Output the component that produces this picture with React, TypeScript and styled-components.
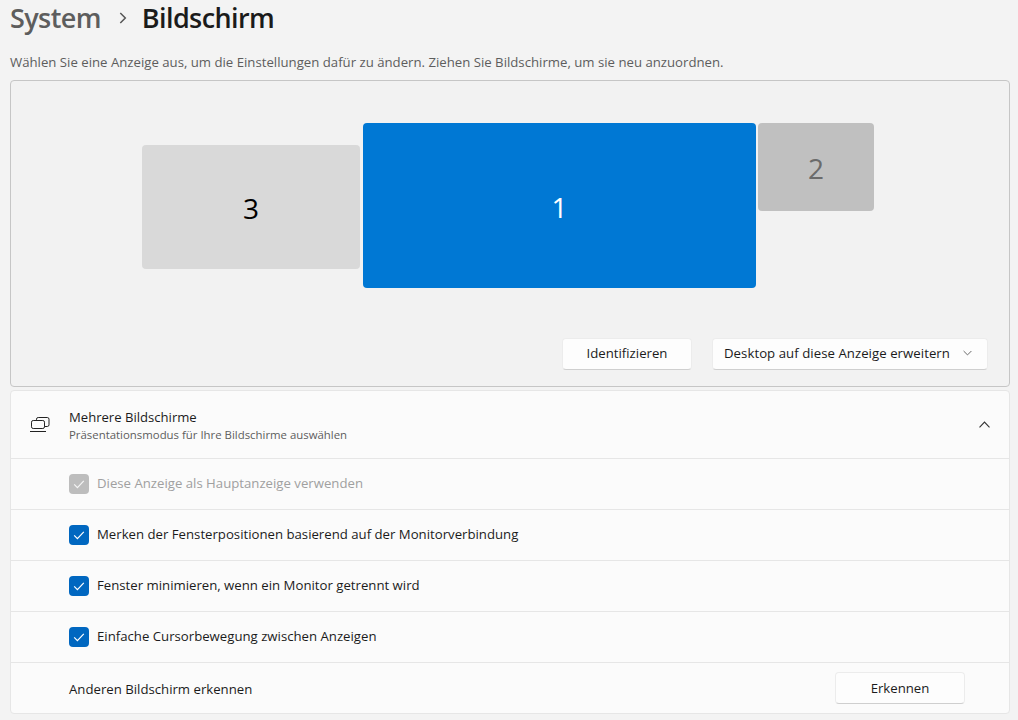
import React from "react";
import styled, { createGlobalStyle } from "styled-components";

const FONT = `"Open Sans", "Noto Sans", "Liberation Sans", sans-serif`;

const GlobalStyle = createGlobalStyle`
  html, body {
    margin: 0;
    height: 100%;
    background: #f3f3f3;
    overflow: hidden;
  }
  * {
    box-sizing: border-box;
  }
`;

const CheckIcon = () => (
  <svg width="12" height="12" viewBox="0 0 12 12" fill="none">
    <path d="M1.2 6.4 4.4 9.6 10.8 2.8" stroke="currentColor" strokeWidth="1.2" />
  </svg>
);

const ChevronDown = () => (
  <svg width="9" height="6" viewBox="0 0 9 6" fill="none">
    <path d="M.6 1 4.5 4.9 8.4 1" stroke="#6a6a6a" strokeWidth="1" />
  </svg>
);

const ChevronUp = () => (
  <svg width="11" height="7" viewBox="0 0 11 7" fill="none">
    <path d="M.5 6.3 5.5 1l5 5.3" stroke="#333" strokeWidth="1.1" />
  </svg>
);

const ChevronRight = () => (
  <svg width="8" height="12" viewBox="0 0 8 12" fill="none">
    <path d="M1.3 1 6.3 6l-5 5" stroke="#555" strokeWidth="1.5" />
  </svg>
);

const DisplaysIcon = () => (
  <svg width="20" height="16" viewBox="0 0 20 16" fill="none" stroke="#222" strokeWidth="1">
    <path d="M6.5 3.5V2.2A1.7 1.7 0 0 1 8.2.5h9.1A1.7 1.7 0 0 1 19 2.2v5.6a1.7 1.7 0 0 1-1.7 1.7h-2.8" />
    <rect x="1.5" y="3.5" width="13" height="8" rx="1.7" />
    <path d="M0 14.5h16" />
  </svg>
);

const options = [
  { label: "Diese Anzeige als Hauptanzeige verwenden", disabled: true },
  { label: "Merken der Fensterpositionen basierend auf der Monitorverbindung", disabled: false },
  { label: "Fenster minimieren, wenn ein Monitor getrennt wird", disabled: false },
  { label: "Einfache Cursorbewegung zwischen Anzeigen", disabled: false },
];

const App = () => {
  return (
    <Page>
      <GlobalStyle />
      <Breadcrumb>
        <ParentCrumb>System</ParentCrumb>
        <CrumbSeparator>
          <ChevronRight />
        </CrumbSeparator>
        <CurrentCrumb>Bildschirm</CurrentCrumb>
      </Breadcrumb>
      <Hint>
        Wählen Sie eine Anzeige aus, um die Einstellungen dafür zu ändern. Ziehen Sie Bildschirme, um sie neu anzuordnen.
      </Hint>
      <Arrangement>
        <Monitor $variant="light" $left={131} $top={64} $width={218} $height={124}>3</Monitor>
        <Monitor $variant="active" $left={352} $top={42} $width={393} $height={165}>1</Monitor>
        <Monitor $variant="dark" $left={747} $top={42} $width={116} $height={88}>2</Monitor>
        <ArrangementActions>
          <Button $width={130}>Identifizieren</Button>
          <SelectButton>
            Desktop auf diese Anzeige erweitern
            <ChevronDown />
          </SelectButton>
        </ArrangementActions>
      </Arrangement>
      <Card>
        <CardHeader>
          <HeaderIcon>
            <DisplaysIcon />
          </HeaderIcon>
          <HeaderText>
            <HeaderTitle>Mehrere Bildschirme</HeaderTitle>
            <HeaderSubtitle>Präsentationsmodus für Ihre Bildschirme auswählen</HeaderSubtitle>
          </HeaderText>
          <ChevronUp />
        </CardHeader>
        {options.map((option) => (
          <Row key={option.label}>
            <Checkbox $disabled={option.disabled}>
              <CheckIcon />
            </Checkbox>
            <RowLabel $disabled={option.disabled}>{option.label}</RowLabel>
          </Row>
        ))}
        <DetectRow>
          <RowLabel>Anderen Bildschirm erkennen</RowLabel>
          <Button $width={130}>Erkennen</Button>
        </DetectRow>
      </Card>
    </Page>
  );
};

const Page = styled.div`
  width: 1018px;
  height: 720px;
  padding: 0 8px 0 10px;
  font-family: ${FONT};
  color: #1b1b1b;
  background: #f3f3f3;
  overflow: hidden;
`;

const Breadcrumb = styled.div`
  display: flex;
  align-items: center;
  height: 35px;
`;

const ParentCrumb = styled.span`
  font-size: 27px;
  font-weight: 600;
  letter-spacing: -0.6px;
  color: #5d5d5d;
`;

const CrumbSeparator = styled.span`
  display: flex;
  margin: 0 15px 0 18px;
`;

const CurrentCrumb = styled.span`
  font-size: 27px;
  font-weight: 600;
  letter-spacing: -0.6px;
  color: #1b1b1b;
`;

const Hint = styled.div`
  margin-top: 17px;
  height: 28px;
  font-size: 13.2px;
  line-height: 20px;
  color: #5d5d5d;
  white-space: nowrap;
`;

const Arrangement = styled.div`
  position: relative;
  display: flex;
  flex-direction: column;
  justify-content: flex-end;
  height: 307px;
  padding: 0 21px 16px 0;
  background: #f2f2f2;
  border: 1px solid #c6c6c6;
  border-radius: 4px;
`;

const monitorColors = {
  light: { bg: "#d9d9d9", fg: "#000000" },
  active: { bg: "#0078d4", fg: "#ffffff" },
  dark: { bg: "#c0c0c0", fg: "#6b6b6b" },
};

const Monitor = styled.div<{
  $variant: keyof typeof monitorColors;
  $left: number;
  $top: number;
  $width: number;
  $height: number;
}>`
  position: absolute;
  left: ${({ $left }) => $left}px;
  top: ${({ $top }) => $top}px;
  width: ${({ $width }) => $width}px;
  height: ${({ $height }) => $height}px;
  display: flex;
  align-items: center;
  justify-content: center;
  padding-top: 2px;
  border-radius: 4px;
  font-size: 28px;
  background: ${({ $variant }) => monitorColors[$variant].bg};
  color: ${({ $variant }) => monitorColors[$variant].fg};
`;

const ArrangementActions = styled.div`
  display: flex;
  justify-content: flex-end;
  gap: 20px;
  > div {
    padding-bottom: 2px;
  }
`;

const Button = styled.div<{ $width: number }>`
  display: flex;
  align-items: center;
  justify-content: center;
  width: ${({ $width }) => $width}px;
  height: 32px;
  font-size: 13.2px;
  color: #1b1b1b;
  background: #fdfdfd;
  border: 1px solid #ececec;
  border-bottom-color: #cfcfcf;
  border-radius: 4px;
`;

const SelectButton = styled.div`
  display: flex;
  align-items: center;
  justify-content: space-between;
  width: 276px;
  height: 32px;
  padding: 0 15px 0 11px;
  font-size: 13.2px;
  letter-spacing: 0.05px;
  color: #1b1b1b;
  background: #fdfdfd;
  border: 1px solid #ececec;
  border-bottom-color: #cfcfcf;
  border-radius: 4px;
  white-space: nowrap;
`;

const Card = styled.div`
  margin-top: 3px;
  width: 1000px;
  background: #fbfbfb;
  border: 1px solid #e6e6e6;
  border-radius: 4px;
`;

const CardHeader = styled.div`
  display: flex;
  align-items: center;
  height: 67px;
  padding: 0 19px 0 19px;
`;

const HeaderIcon = styled.div`
  display: flex;
  width: 39px;
  margin-top: 1px;
`;

const HeaderText = styled.div`
  display: flex;
  flex: 1;
  flex-direction: column;
  gap: 1px;
`;

const HeaderTitle = styled.div`
  font-size: 13.1px;
  line-height: 18px;
`;

const HeaderSubtitle = styled.div`
  font-size: 11.4px;
  line-height: 15px;
  color: #5d5d5d;
`;

const Row = styled.div`
  display: flex;
  align-items: center;
  gap: 8px;
  height: 51px;
  padding-left: 58px;
  border-top: 1px solid #e6e6e6;
`;

const DetectRow = styled(Row)`
  justify-content: space-between;
  padding-right: 44px;
  > div:first-child {
    margin-top: 1px;
  }
`;

const Checkbox = styled.div<{ $disabled: boolean }>`
  display: flex;
  align-items: center;
  justify-content: center;
  width: 20px;
  height: 20px;
  border-radius: 4px;
  color: ${({ $disabled }) => ($disabled ? "#f5f5f5" : "#ffffff")};
  background: ${({ $disabled }) => ($disabled ? "#bdbdbd" : "#0067c0")};
`;

const RowLabel = styled.div<{ $disabled?: boolean }>`
  font-size: 13.2px;
  line-height: 18px;
  margin-top: -3px;
  color: ${({ $disabled }) => ($disabled ? "#a0a0a0" : "#1b1b1b")};
  white-space: nowrap;
`;

export default App;
